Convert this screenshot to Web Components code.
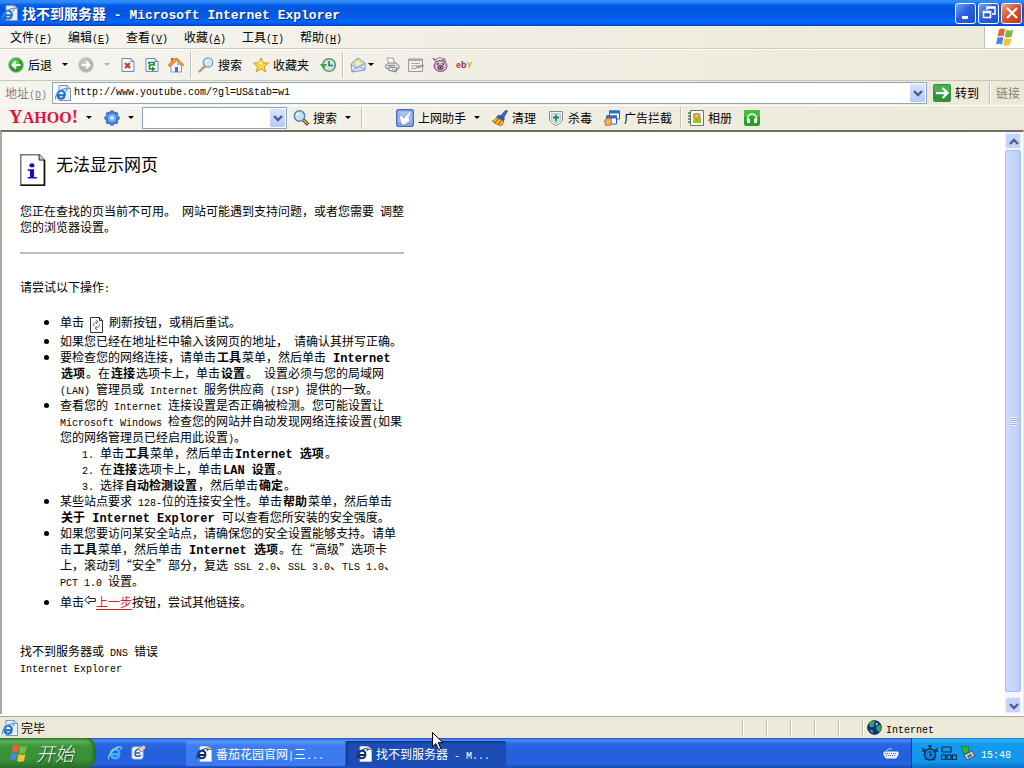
<!DOCTYPE html>
<html lang="zh-CN">
<head>
<meta charset="utf-8">
<title>找不到服务器 - Microsoft Internet Explorer</title>
<style>
html, body { margin: 0; height: 100%; }
body { overflow: hidden; font: 12px/16px "Noto Sans CJK SC", "Liberation Sans", sans-serif; color: #000; text-spacing-trim: space-all; }
</style>
</head>
<body>
<xp-desktop></xp-desktop>
<script>
const BASE = `
*, *::before { box-sizing: border-box; }
button, input { font: inherit; color: inherit; margin: 0; padding: 0; border: 0; background: none; border-radius: 0; outline: 0; text-spacing-trim: inherit; }
button { white-space: nowrap; text-align: left; }
.l { font-family: "Liberation Mono", monospace; font-size: 10px; line-height: 10px; white-space: pre; }
b .l { font-size: 12px; line-height: 12px; }
`;

/* Half-width runs get a monospaced face so that they take half an ideograph each. */
function wrapLatin(root) {
  const walker = document.createTreeWalker(root, NodeFilter.SHOW_TEXT);
  const nodes = [];
  while (walker.nextNode()) nodes.push(walker.currentNode);
  for (const node of nodes) {
    if (node.parentElement && node.parentElement.closest('style, svg, .plain')) continue;
    const text = node.data.replace(/\n\s*/g, '');
    if (!text.trim()) continue;
    const parts = text.split(/([\x20-\x7e]+)/);
    const out = document.createDocumentFragment();
    parts.forEach((part, i) => {
      if (!part) return;
      if (i % 2) {
        const span = document.createElement('span');
        span.className = 'l';
        span.textContent = part;
        out.append(span);
      } else out.append(part);
    });
    node.replaceWith(out);
  }
}

function define(name, css, html) {
  customElements.define(name, class extends HTMLElement {
    constructor() {
      super();
      const template = document.createElement('template');
      template.innerHTML = `<style>${BASE}${css}</style>${html}`;
      this.attachShadow({ mode: 'open' }).append(template.content.cloneNode(true));
      wrapLatin(this.shadowRoot);
    }
  });
}

const E_GLYPH = (c, hi) => `<path d="M4 9.3h8.2c.3-3.2-1.400-5-4-5-2.500 0-4.300 1.900-4.300 4.500 0 2.700 1.800 4.400 4.300 4.400 1.900 0 3.200-.9 3.800-2.500" fill="none" stroke="${c}" stroke-width="2.400"/><path d="M2 14C-.5 12 6 3.500 11.500 2c3-.8 3.500.8 2.600 2.700" fill="none" stroke="${hi}" stroke-width="1.300"/>`;
const ICONS = {
  iepage: `<path d="M4 .5h8l3.500 3v12H4z" fill="#e9eefb" stroke="#8890b0"/><path d="M12 .5v3h3.500" fill="#cdd4ea" stroke="#8890b0"/><g transform="translate(-1 2) scale(.88)">${E_GLYPH('#1d6fc4', '#3b9ae0')}</g>`,
  iedark: `<path d="M4 .5h8l3.500 3v12H4z" fill="#fff" stroke="#c9c6b8"/><path d="M12 .5v3h3.500" fill="#e8d9b8" stroke="#7a7568"/><g transform="translate(-1 1) scale(.85)">${E_GLYPH('#12306e', '#1c3f86')}</g>`,
  ie: E_GLYPH('#43b1f5', '#7fd0ff'),
  back: `<circle cx="8" cy="8" r="7.500" fill="#2f9e2c" stroke="#a8cfa0"/><circle cx="7" cy="6" r="4.500" fill="#5cc455"/><path d="M12.500 8H5M8 4.500L4.500 8 8 11.500" fill="none" stroke="#fff" stroke-width="2"/>`,
  fwd: `<circle cx="8" cy="8" r="7.500" fill="#b5b5ad" stroke="#d5d5cc"/><circle cx="7" cy="6" r="4.500" fill="#c6c6c0"/><path d="M3.500 8H11M8 4.500L11.500 8 8 11.500" fill="none" stroke="#fff" stroke-width="2"/>`,
  stop: `<path d="M2 1.500h9l3 3v10H2z" fill="#f4f7ff" stroke="#7288bd"/><path d="M11 1.500v3h3" fill="#c7d4f4" stroke="#7288bd"/><path d="M5 6l5 5M10 6l-5 5" stroke="#dc3a20" stroke-width="2.200"/>`,
  refresh: `<path d="M2 1.500h9l3 3v10H2z" fill="#f4f7ff" stroke="#7288bd"/><path d="M11 1.500v3h3" fill="#c7d4f4" stroke="#7288bd"/><path d="M5 7V5.500h5L10 8H5.500v4H9" fill="none" stroke="#189232" stroke-width="1.700"/><path d="M8 9.500l3.500 2.500L8 14.500z" fill="#189232"/>`,
  home: `<path d="M3 8l5-5 5.500 5v7H3z" fill="#f6f8ff" stroke="#8798c4"/><path d="M0 8.500L5 2l4-1 7 7-2 1-5.500-5L2 10z" fill="#f0963c" stroke="#c26f22" stroke-width=".6"/><path d="M3 4V1h2v2" fill="#c05a30"/><path d="M7 10h3v5H7z" fill="#5574b5"/><path d="M9 6h3v2H9z" fill="#8fb2e6"/>`,
  search: `<path d="M7 9L1.500 14.500" stroke="#c69461" stroke-width="2.400" stroke-linecap="round"/><circle cx="10" cy="5.500" r="4.700" fill="#cbeaf5" stroke="#7a9db8" stroke-width="1.300"/><path d="M7.500 5c.3-1.500 1.300-2.200 2.500-2.200" stroke="#fff" fill="none"/>`,
  star: `<path d="M8 .8l2.100 5 5.400.3-4.200 3.400 1.500 5.400L8 11.900l-4.700 3 1.400-5.400L.5 6.100l5.400-.3z" fill="#ffd84a" stroke="#cf9e1c"/><path d="M8 3l1 4H5z" fill="#fff3a6"/>`,
  history: `<circle cx="9" cy="8" r="6.300" fill="#cfe6d8" stroke="#53a164" stroke-width="1.600"/><path d="M9 4v4.500h4" fill="none" stroke="#43638c" stroke-width="1.500"/><path d="M0 7h7L3.500 12z" fill="#3aa648"/>`,
  mail: `<path d="M1 7l7-6 7 5v7L2 15z" fill="#dce8fb" stroke="#8296c3"/><path d="M4 4.500l5-2 3 4-4 3.500-4-3z" fill="#f3efaa" stroke="#aab18a" stroke-width=".6"/><path d="M1 7l6 4.500L15 6M2 15l4.500-5M15 13L9.500 9.500" fill="none" stroke="#7e95c8"/>`,
  printer: `<path d="M3 1h6l2 6H5z" fill="#fff" stroke="#999"/><path d="M1.500 8l3-2h7.500l3 2.500v3L12 13 2 11.500z" fill="#dcdcdc" stroke="#888"/><path d="M5 10l8 1-1 4-7-1.500z" fill="#f7f7f7" stroke="#777"/><path d="M4 8.500h7M8 12.500l4 1" stroke="#888"/>`,
  edit: `<path d="M.5 2h14v12.500H.5z" fill="#efefea" stroke="#999"/><path d="M.5 2h14v2H.5z" fill="#aaa"/><path d="M3 6.500h9M3 9h8M3 11.500h5" stroke="#aaa"/><path d="M8 10l7-2.500 1 1.500-7 2z" fill="#bbb" stroke="#777" stroke-width=".6"/>`,
  pig: `<ellipse cx="8.500" cy="9" rx="6.500" ry="5.500" fill="#dcb3cf" stroke="#704f6c"/><path d="M4 5L1 1.500 5 3M11 4l1-3 2 4M4 3c2-3 6-3 7 0" fill="none" stroke="#85637f"/><ellipse cx="8.500" cy="10.500" rx="2.500" ry="2" fill="#b7769e" stroke="#54354f"/><path d="M5 7h1.500M10.500 7H12M8 10.500h1" stroke="#222" stroke-width="1.400"/>`,
  flower: `<g fill="#3f7fe6" stroke="#2459c0" stroke-width=".6"><circle cx="8" cy="2.500" r="2"/><circle cx="11.900" cy="4.100" r="2"/><circle cx="13.500" cy="8" r="2"/><circle cx="11.900" cy="11.900" r="2"/><circle cx="8" cy="13.500" r="2"/><circle cx="4.100" cy="11.900" r="2"/><circle cx="2.500" cy="8" r="2"/><circle cx="4.100" cy="4.100" r="2"/></g><circle cx="8" cy="8" r="4" fill="#5aa0f4"/><path d="M8 4v8M4 8h8M5 5l6 6M11 5l-6 6" stroke="#9ed2ff"/><circle cx="8" cy="8" r="1.500" fill="#fffbd0"/>`,
  ysearch: `<circle cx="6.500" cy="6" r="5.200" fill="#bfe3fb" stroke="#5b7fa8" stroke-width="1.500"/><path d="M3.500 5.500c.3-1.500 1.300-2.300 2.700-2.300" fill="none" stroke="#fff" stroke-width="1.300"/><path d="M10.500 10l4.500 4.500" stroke="#3b3017" stroke-width="3.200"/><path d="M10.500 10l4 4" stroke="#efbf3c" stroke-width="1.600"/>`,
  helper: `<rect x=".5" y=".5" width="15" height="15" rx="2" fill="#7fa4e8" stroke="#4868b0"/><path d="M2 2h12v9L8 14 2 11z" fill="#a9c4f4"/><path d="M3 5l3 1.500 1 1.500 5-6 1.500 1.500-2 4 1 3-5.500 4-3-2z" fill="#fff" stroke="#6683c0" stroke-width=".6"/>`,
  broom: `<path d="M14 0l1.500 1-4 7-3-2z" fill="#3a6fd0" stroke="#1c3c88" stroke-width=".7"/><path d="M6.500 5l6 3.500-1 2.500-7-3.500z" fill="#2f62c4" stroke="#1c3c88" stroke-width=".7"/><path d="M4.500 7.500l7 3.500c0 2-1 4-2 5C6 15 2 13 0 11c2-.5 3.500-2 4.500-3.500z" fill="#f3b32a" stroke="#8f5e10" stroke-width=".7"/><path d="M6 9l-3 4M9 10.500L6.500 15" stroke="#8f5e10"/>`,
  shield: `<path d="M1.500 1.500h13V9c0 3-3 5-6.500 6.500C4.500 14 1.500 12 1.500 9z" fill="#f3f6f6" stroke="#7f8d90"/><path d="M3.500 3.500h9V9c0 2-2 3.500-4.500 4.500C5.500 12.500 3.500 11 3.500 9z" fill="#d3e6e4" stroke="#a5b6b6" stroke-width=".7"/><path d="M8 4.500v7M5 7.500h6" stroke="#27847a" stroke-width="1.800"/>`,
  popup: `<path d="M5.500 1h10v8h-10z" fill="#fff" stroke="#2361b8"/><path d="M5 .5h11v3H5z" fill="#2b6fcb"/><path d="M2.500 6h10v8h-10z" fill="#fff" stroke="#2361b8"/><path d="M2 5.500h11v3H2z" fill="#2b6fcb"/><path d="M.5 11l2-3 1 1 1-2 1 2 1.500-1 .5 5-2 3H2z" fill="#f5ad62" stroke="#a65a1c" stroke-width=".8"/>`,
  album: `<path d="M2.500.5h13v15h-13z" fill="#fff" stroke="#58805c"/><path d="M5 3h8v10H5z" fill="#9fd5ee"/><path d="M5 10l3-2 2 1 3-2v6H5z" fill="#a9be18"/><circle cx="8.500" cy="6" r="2.600" fill="#ffc919" stroke="#ca711b"/><path d="M0 3h3M0 6h3M0 9h3M0 12h3" stroke="#47774c" stroke-width="1.400"/>`,
  phones: `<rect width="16" height="16" rx="2" fill="#22a31d"/><path d="M0 2a2 2 0 0 1 2-2h12a2 2 0 0 1 2 2v5H0z" fill="#45bd3b"/><path d="M3.500 11V8.500a4.500 4.500 0 0 1 9 0V11" fill="none" stroke="#fff" stroke-width="1.500"/><path d="M3 8.500h3V13H3zM10 8.500h3V13h-3z" fill="#fff"/>`,
  go: `<rect width="16" height="16" rx="2" fill="#2b9537"/><path d="M1 1h14v6H1z" fill="#4cae53"/><path d="M2.500 8H13M8.500 3.500L13 8l-4.500 4.500" fill="none" stroke="#fff" stroke-width="2"/>`,
  flag: `<path d="M3.200 2C5 .8 6.500 1 8 1.800L6.900 7.500C5.400 6.700 3.900 6.700 2.100 7.500z" fill="#e8603a"/><path d="M8.900 2.200c1.700.9 3.500.9 5.600 0l-1.200 5.600c-2 .9-3.900.8-5.500-.1z" fill="#7bb844"/><path d="M1.900 8.500c1.700-.8 3.300-.8 4.800 0l-1.100 5.400c-1.500-.8-3.100-.8-4.800 0z" fill="#4888e0"/><path d="M7.600 8.800c1.700.9 3.500.9 5.500.1L12 14.400c-2 .8-3.900.8-5.500-.1z" fill="#f5c430"/>`,
  globe: `<circle cx="8" cy="8" r="7.300" fill="#12308e" stroke="#0b1745"/><path d="M3 3c2-2 5-2 6-1L7 4l1 2-3 2-3-2zM10 7l4-2c2 3 1 6-1 8l-3-3zM3 10l3 1 1 3-3-1z" fill="#35a852"/><path d="M9 3l3 1-2 2z" fill="#b4e9ff"/>`,
  keyboard: `<path d="M1 7h14v3l-2 3H3l-2-3z" fill="#e9eefa" stroke="#eef4ff"/><path d="M2 8.500h12M3 10.500h10" stroke="#5570a8" stroke-dasharray="1 1"/><path d="M4 6c0-3 3-1 5-3" fill="none" stroke="#dfe9ff"/>`,
  timer: `<circle cx="8" cy="9.500" r="5.500" fill="none" stroke="#082a55" stroke-width="1.500"/><circle cx="8" cy="9.500" r="3" fill="none" stroke="#082a55" stroke-dasharray="1 1"/><path d="M8 6v4h2M6 1h4M8 1v3M0 3l3 2M16 3l-3 2M0 6h2.500M13.500 6H16M3 15l1-1M13 15l-1-1" fill="none" stroke="#082a55" stroke-width="1.300"/>`,
  net: `<path d="M1 2h9v5H1zM.5 10h4v4.500h-4zM6 10h4v4.500H6zM11.500 10h4v4.500h-4z" fill="none" stroke="#082a55" stroke-width="1.200"/>`,
  safe: `<path d="M1 1l8 1-1 6-4 1z" fill="#35b735" stroke="#11731a" stroke-width=".7"/><path d="M4 10l8-4 3 5-8 4z" fill="#c8d0cf" stroke="#3f4f60"/><path d="M7 11l4-2 1 2-4 2z" fill="#536070"/>`,
  compass: `<rect x="2" y="2" width="11" height="12" rx="2" fill="#f5f8ff" stroke="#a9c4f4"/><path d="M11 5C8 3 5 5 5 8.500S9 12 11 10M6 8h4" fill="none" stroke="#2a5aa8" stroke-width="1.500"/><path d="M8 4l6-4 2 3-5 4z" fill="#e3d7bb" stroke="#6e6a65" stroke-width=".7"/>`,
  info: `<path d="M.5.5h12.200L16 4v16.500H.5z" fill="#fff" stroke="#777"/><path d="M16 4v16.500H.5" fill="none" stroke="#111"/><path d="M12.500.5V4H16" fill="#ccc" stroke="#111" stroke-width=".6"/><ellipse cx="7.800" cy="7.500" rx="1.700" ry="1.400" fill="#2008c8"/><path d="M5 10h4.200v5H11v1H5v-1h1.500v-4H5z" fill="#2008c8"/>`,
  redo: `<path d="M.5.5h9l3 3v12H.5z" fill="#fff" stroke="#333"/><path d="M9.500.5v3h3" fill="none" stroke="#333"/><path d="M3.500 9c0-3 1-4 4-4M6 3l2 2-2 2M9.500 7c0 3-1 4-4 4M7 13l-2-2 2-2" fill="none" stroke="#777"/>`,
  prev: `<path d="M.7 5L5 1v2.500h6.300v3H5V9z" fill="#fff" stroke="#222"/>`,
  min: `<path d="M4 11h6v3H4z" fill="#fff"/>`,
  max: `<path d="M6 5V2h8v7h-3M6 3h8" fill="none" stroke="#fff" stroke-width="1.500"/><path d="M2.500 6.500h7v6h-7zM2.500 7.500h7" fill="none" stroke="#fff" stroke-width="1.500"/>`,
  close: `<path d="M3 3l10 10M13 3L3 13" stroke="#fff" stroke-width="2.200"/>`,
  down: `<path d="M4 6l4 4 4-4" fill="none" stroke="#4a5f8e" stroke-width="2.400"/>`,
  up: `<path d="M4 10l4-4 4 4" fill="none" stroke="#4a5f8e" stroke-width="2.400"/>`,
  caret: `<path d="M2 6h6L5 9z" fill="currentColor"/>`,
  cursor: `<path d="M.5.5v14.200l3.300-3.200 2.600 6 2.400-1-2.500-5.800H11z" fill="#fff" stroke="#000"/>`
};
const BOX = { info: '0 0 17 21', redo: '0 0 13 16', prev: '0 0 12 10', caret: '0 0 10 16', cursor: '0 0 12 19' };

customElements.define('ui-icon', class extends HTMLElement {
  connectedCallback() {
    if (this.shadowRoot) return;
    const name = this.getAttribute('name');
    this.attachShadow({ mode: 'open' }).innerHTML = `
      <style>:host{display:inline-block;flex:none;width:var(--w,16px);height:var(--h,var(--w,16px))}svg{display:block;width:100%;height:100%}</style>
      <svg viewBox="${BOX[name] || '0 0 16 16'}" aria-hidden="true">${ICONS[name]}</svg>`;
  }
});

define('tool-button', `
:host { display: flex; }
button { display: flex; align-items: center; gap: 4px; height: 20px; line-height: 20px; }
`, `<button type="button"><slot></slot></button>`);

define('tool-sep', `:host { display: block; flex: none; width: 2px; height: var(--sep-h, 26px); border-left: 1px solid #c5c2b2; border-right: 1px solid #fff; }`, ``);

define('title-bar', `
:host { display: flex; align-items: center; height: 26px; flex: none; padding: 0 2px; gap: 4px; color: #fff;
  background: linear-gradient(#2f8bf8 0, #2f8bf8 2px, #0660ec 5px, #0355dd 9px, #0459e6 16px, #0068ff 22px, #0050d8 25px, #003cb4 26px); }
h1 { flex: 1; margin: 0; font-size: 14px; line-height: 24px; font-weight: bold; text-shadow: 1px 1px 0 #0a2a86; white-space: nowrap; }
h1 .l { font-size: 13px; line-height: 13px; font-weight: bold; }
div { display: flex; gap: 2px; }
button { width: 21px; height: 21px; display: grid; place-items: center; border: 1px solid #fff; border-radius: 3px; background: linear-gradient(135deg, #7aa2f5, #2a5fe0 45%, #1c4fd2); }
.x { background: linear-gradient(135deg, #f0a48c, #dd5230 45%, #c23a18); }
`, `<ui-icon name="iepage"></ui-icon><h1>找不到服务器 - Microsoft Internet Explorer</h1>
<div><button aria-label="最小化"><ui-icon name="min"></ui-icon></button><button aria-label="还原"><ui-icon name="max"></ui-icon></button><button class="x" aria-label="关闭"><ui-icon name="close"></ui-icon></button></div>`);

define('menu-bar', `
:host { display: flex; height: 23px; flex: none; background: linear-gradient(90deg, #f5f4ef, #ece9d8); border-bottom: 1px solid #d0cdbd; }
nav { flex: 1; display: flex; padding-left: 2px; }
nav button { width: 58px; padding-left: 8px; line-height: 22px; }
.brand { width: 40px; display: grid; place-items: center; background: #fff; border-left: 1px solid #c5c2b2; --w: 20px; }
`, `<nav><button>文件(<u>F</u>)</button><button>编辑(<u>E</u>)</button><button>查看(<u>V</u>)</button><button>收藏(<u>A</u>)</button><button>工具(<u>T</u>)</button><button>帮助(<u>H</u>)</button></nav>
<div class="brand"><ui-icon name="flag"></ui-icon></div>`);

define('main-toolbar', `
:host { display: flex; align-items: center; height: 32px; flex: none; padding-left: 8px; border-top: 1px solid #fff; border-bottom: 1px solid #c9c6b6; background: linear-gradient(90deg, #f5f4ef, #ece9d8); }
.c { --w: 10px; --h: 16px; }
.off { color: #b5b2a3; }
.set { display: flex; align-items: center; gap: 8px; }
.finds { gap: 11px; }
.s { margin: 0 6px; }
`, `<div class="set"><tool-button><ui-icon name="back"></ui-icon>后退</tool-button><ui-icon class="c" name="caret"></ui-icon><span></span></div>
<div class="set"><ui-icon name="fwd"></ui-icon><ui-icon class="c off" name="caret"></ui-icon><tool-button><ui-icon name="stop"></ui-icon></tool-button><tool-button><ui-icon name="refresh"></ui-icon></tool-button><tool-button><ui-icon name="home"></ui-icon></tool-button></div>
<tool-sep class="s"></tool-sep>
<div class="set finds"><tool-button><ui-icon name="search"></ui-icon>搜索</tool-button><tool-button><ui-icon name="star"></ui-icon>收藏夹</tool-button><tool-button><ui-icon name="history"></ui-icon></tool-button></div>
<tool-sep class="s"></tool-sep>
<div class="set"><tool-button><ui-icon name="mail"></ui-icon><ui-icon class="c" style="margin-left:-4px" name="caret"></ui-icon></tool-button><tool-button><ui-icon name="printer"></ui-icon></tool-button><tool-button><ui-icon name="edit"></ui-icon></tool-button><tool-button><ui-icon name="pig"></ui-icon></tool-button><ebay-mark></ebay-mark></div>`);

define('ebay-mark', `
:host { display: block; font: bold 9px/16px "Liberation Sans", sans-serif; }
i { font-style: normal; } .e { color: #e02a2a; } .b { color: #8a2a60; } .y { color: #c4b81a; }
`, `<span class="plain"><i class="e">e</i><i class="b">b</i><i class="y">Y</i></span>`);

define('combo-box', `
:host { display: flex; align-items: center; min-width: 0; height: 22px; background: #fff; border: 1px solid #8ea5bd; }
slot { display: flex; }
input { flex: 1; min-width: 0; height: 18px; padding-left: 3px; font: 10px/18px "Liberation Mono", monospace; }
button { width: 15px; height: 18px; margin-right: 1px; display: grid; place-items: center; border-radius: 1px; background: linear-gradient(#dbe4fd, #b5c8f6); }
`, `<slot></slot><input aria-label="输入"><button aria-label="展开"><ui-icon name="down"></ui-icon></button>`);

define('address-bar', `
:host { display: flex; align-items: center; height: 24px; flex: none; padding-left: 5px; background: linear-gradient(90deg, #f5f4ef, #ece9d8); }
.grey { color: #85837a; white-space: nowrap; }
combo-box { flex: 1; margin: 0 6px 0 5px; }
combo-box ui-icon { margin-left: 2px; }
.go { --w: 18px; margin-right: 10px; }
.links { margin: 0 4px 0 5px; }
`, `<span class="grey">地址(<u>D</u>)</span><combo-box data-value="http://www.youtube.com/?gl=US&tab=w1"><ui-icon name="iepage"></ui-icon></combo-box><tool-button class="go"><ui-icon name="go"></ui-icon>转到</tool-button><tool-sep style="--sep-h:22px"></tool-sep><span class="grey links">链接</span>`);

define('yahoo-toolbar', `
:host { display: flex; align-items: center; height: 25px; flex: none; padding: 0 0 1px 9px; background: linear-gradient(90deg, #f5f4ef, #ece9d8); border-top: 1px solid #fff; --sep-h: 22px; }
.logo { width: 75px; color: #e3123c; font: bold 16px/22px "Liberation Serif", serif; white-space: nowrap; }
.logo big { font-size: 19px; line-height: 20px; }
.c { --w: 10px; --h: 16px; }
.g { margin-left: 10px; }
.h { margin-left: 12px; }
.m { margin-left: 8px; }
.n { margin-left: 6px; }
combo-box { width: 145px; margin: 0 6px; }
.w { --w: 18px; --h: 18px; margin-left: 33px; }
`, `<span class="logo plain"><big>Y</big>AHOO<big>!</big></span><ui-icon class="c" name="caret"></ui-icon><ui-icon class="g" name="flower"></ui-icon><ui-icon class="c n" name="caret"></ui-icon>
<combo-box></combo-box><tool-button><ui-icon name="ysearch"></ui-icon>搜索</tool-button><ui-icon class="c n" name="caret"></ui-icon><tool-sep class="m"></tool-sep>
<tool-button class="w"><ui-icon name="helper"></ui-icon>上网助手</tool-button><ui-icon class="c n" name="caret"></ui-icon>
<tool-button class="g"><ui-icon name="broom"></ui-icon>清理</tool-button><tool-button class="h"><ui-icon name="shield"></ui-icon>杀毒</tool-button><tool-button class="h"><ui-icon name="popup"></ui-icon>广告拦截</tool-button>
<tool-sep class="m"></tool-sep><tool-button class="n"><ui-icon name="album"></ui-icon>相册</tool-button><tool-button class="h"><ui-icon name="phones"></ui-icon></tool-button>`);

define('error-page', `
:host { display: block; flex: 1; min-width: 0; overflow: hidden; padding: 20px 0 0 18px; background: #fff; }
article { max-width: 384px; white-space: nowrap; }
header { display: flex; gap: 10px; align-items: flex-start; }
header ui-icon { --w: 26px; --h: 36px; }
h2 { margin: 0; font-size: 17px; line-height: 24px; font-weight: 400; }
p { margin: 0; }
.lead { margin-top: 15px; line-height: 15px; }
hr { margin: 18px 0 0; border: 0; height: 2px; background: #bdbdbd; }
.try { margin-top: 25px; }
ul, ol { margin: 0; padding-left: 40px; }
ul { margin-top: 17px; }
ol li::marker { font: 10px "Liberation Mono", monospace; }
b { padding: 0 1px; }
.tall { line-height: 19px; }
.tall ui-icon { --w: 13px; --h: 16px; margin: 0 6px; vertical-align: -6px; height: 16px; }
.last { margin-top: 4px; line-height: 18px; }
.last ui-icon { --w: 12px; --h: 10px; vertical-align: 2px; }
a { color: #d0202c; text-decoration: underline; text-underline-offset: 2px; }
footer { margin-top: 32px; }
`, `<article>
<header><ui-icon name="info"></ui-icon><h2>无法显示网页</h2></header>
<p class="lead">您正在查找的页当前不可用。 网站可能遇到支持问题，或者您需要 调整<br>您的浏览器设置。</p>
<hr>
<p class="try">请尝试以下操作:</p>
<ul>
<li class="tall">单击<ui-icon name="redo"></ui-icon>刷新按钮，或稍后重试。</li>
<li>如果您已经在地址栏中输入该网页的地址， 请确认其拼写正确。</li>
<li>要检查您的网络连接，请单击<b>工具</b>菜单，然后单击 <b>Internet</b><br><b>选项</b>。在<b>连接</b>选项卡上，单击<b>设置</b>。 设置必须与您的局域网<br>(LAN) 管理员或 Internet 服务供应商 (ISP) 提供的一致。</li>
<li>查看您的 Internet 连接设置是否正确被检测。您可能设置让<br>Microsoft Windows 检查您的网站并自动发现网络连接设置(如果<br>您的网络管理员已经启用此设置)。
<ol><li>单击<b>工具</b>菜单，然后单击<b>Internet 选项</b>。</li><li>在<b>连接</b>选项卡上，单击<b>LAN 设置</b>。</li><li>选择<b>自动检测设置</b>，然后单击<b>确定</b>。</li></ol></li>
<li>某些站点要求 128-位的连接安全性。单击<b>帮助</b>菜单，然后单击<br><b>关于 Internet Explorer</b> 可以查看您所安装的安全强度。</li>
<li>如果您要访问某安全站点，请确保您的安全设置能够支持。请单<br>击<b>工具</b>菜单，然后单击 <b>Internet 选项</b>。在“高级”选项卡<br>上，滚动到“安全”部分，复选 SSL 2.0、SSL 3.0、TLS 1.0、<br>PCT 1.0 设置。</li>
<li class="last">单击<ui-icon name="prev"></ui-icon><a href="#back">上一步</a>按钮，尝试其他链接。</li>
</ul>
<footer>找不到服务器或 DNS 错误<br>Internet Explorer</footer>
</article>`);

define('scroll-bar', `
:host { display: flex; flex-direction: column; gap: 1px; flex: none; width: 16px; margin-right: 2px; padding: 1px 0; background: #f5f6fd; }
button { height: 16px; display: grid; place-items: center; border: 1px solid #e8eefe; border-radius: 2px; background: #c5d4fb; }
.track { flex: 1; padding-bottom: 4px; display: flex; }
.thumb { flex: 1; display: grid; place-items: center; border: 1px solid #a9bdf0; border-radius: 2px; background: linear-gradient(90deg, #cddbff, #c3d3fd 60%, #b7cbfa); }
.grip { width: 7px; height: 9px; background: repeating-linear-gradient(#eef4fe 0 1px, #9db3ea 1px 2px); }
`, `<button aria-label="向上"><ui-icon name="up"></ui-icon></button><div class="track"><div class="thumb"><span class="grip"></span></div></div><button aria-label="向下"><ui-icon name="down"></ui-icon></button>`);

define('status-bar', `
:host { display: flex; align-items: center; height: 22px; flex: none; padding-left: 2px; background: #ece9d8; border-top: 1px solid #aca899; --sep-h: 16px; }
.done { flex: 1; display: flex; gap: 3px; align-items: center; }
.cells { display: flex; gap: 22px; }
.zone { width: 160px; display: flex; align-items: center; gap: 4px; padding-left: 3px; }
.zone ui-icon { --w: 15px; }
`, `<span class="done"><ui-icon name="iepage"></ui-icon>完毕</span><span class="cells"><tool-sep></tool-sep><tool-sep></tool-sep><tool-sep></tool-sep><tool-sep></tool-sep><tool-sep></tool-sep><tool-sep></tool-sep></span><span class="zone"><ui-icon name="globe"></ui-icon><span>Internet</span></span>`);

define('task-bar', `
:host { display: flex; height: 30px; flex: none; color: #fff; background: linear-gradient(#1f4fb8 0, #4a8cf4 2px, #2a66e2 6px, #245edb 15px, #2562e2 26px, #1c48b0 30px); }
.start { width: 96px; display: flex; align-items: center; gap: 7px; padding-left: 9px; border-radius: 0 10px 10px 0; font-size: 19px; font-style: italic; font-weight: 300; text-shadow: 1px 1px 1px #163c10; background: linear-gradient(#2f7a2f 0, #5fb05c 3px, #3c963a 8px, #378f36 22px, #2a6e29 30px); box-shadow: inset -3px 0 3px #2a6e29; --w: 20px; }
.quick { width: 90px; display: flex; align-items: center; gap: 7px; padding-left: 11px; }
.tab { width: 159px; height: 25px; margin-top: 3px; display: flex; align-items: center; gap: 4px; padding-left: 10px; border-radius: 2px; background: linear-gradient(#5c9af8, #3c7cf0 5px, #3a7af0); }
.on { width: 160px; margin-left: 1px; background: #1c4cb4; box-shadow: inset 1px 1px 2px #0f2f80; }
.mid { flex: 1; display: flex; align-items: center; justify-content: flex-end; padding-right: 12px; }
.tray { width: 113px; display: flex; align-items: center; gap: 3px; padding-left: 10px; border-left: 1px solid #0b3fa0; background: linear-gradient(#1a7ad8 0, #2bb2f6 2px, #149bee 6px, #1295ea 24px, #0e6cc4 30px); }
time { margin-left: 2px; }
`, `<button class="start"><ui-icon name="flag"></ui-icon>开始</button><div class="quick"><ui-icon name="ie"></ui-icon><ui-icon name="compass"></ui-icon></div>
<button class="tab"><ui-icon name="iedark"></ui-icon><span>番茄花园官网|三...</span></button><button class="tab on"><ui-icon name="iedark"></ui-icon><span>找不到服务器 - M...</span></button>
<div class="mid"><ui-icon name="keyboard"></ui-icon></div><div class="tray"><ui-icon name="timer"></ui-icon><ui-icon name="net"></ui-icon><ui-icon name="safe"></ui-icon><time>15:48</time></div>`);

define('xp-desktop', `
:host { display: flex; flex-direction: column; min-height: 100%; height: 100vh; position: relative; }
main { flex: 1; min-height: 0; display: flex; margin-bottom: 2px; border-top: 2px solid #716f64; border-left: 2px solid #aca899; border-right: 1px solid #ece9d8; }
.pointer { position: absolute; left: 42.2%; bottom: 17px; --w: 12px; --h: 19px; }
`, `<title-bar></title-bar><menu-bar></menu-bar><main-toolbar></main-toolbar><address-bar></address-bar><yahoo-toolbar></yahoo-toolbar>
<main><error-page></error-page><scroll-bar></scroll-bar></main><status-bar></status-bar><task-bar></task-bar><ui-icon class="pointer" name="cursor"></ui-icon>`);

const address = document.querySelector('xp-desktop').shadowRoot.querySelector('address-bar').shadowRoot.querySelector('combo-box');
address.shadowRoot.querySelector('input').value = address.dataset.value;
</script>
</body>
</html>
